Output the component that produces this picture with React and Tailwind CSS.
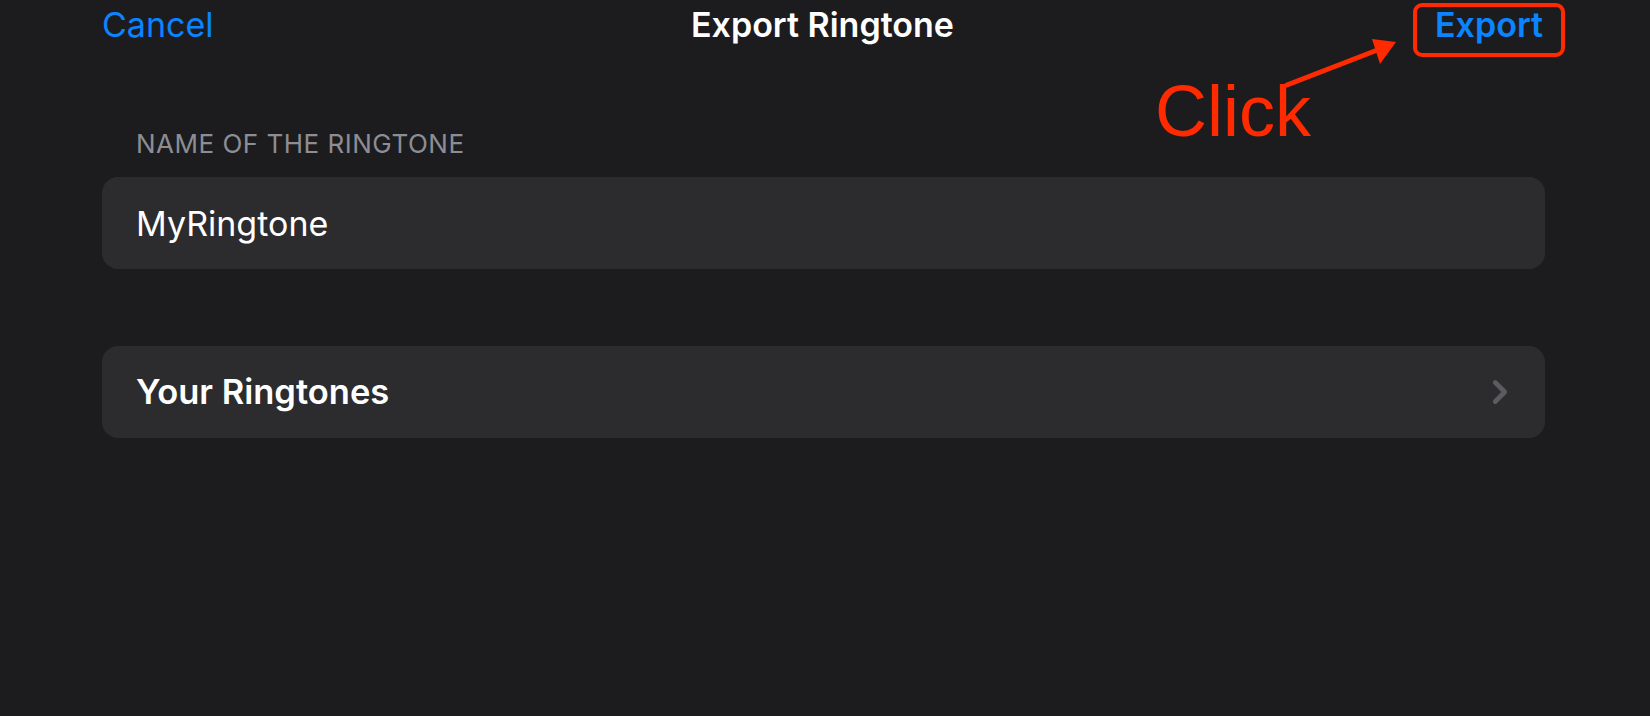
import { ChevronRight } from 'lucide-react';

const font = { fontFamily: 'Inter, "Liberation Sans", sans-serif' };

export default function App() {
  return (
    <div className="relative w-[1650px] h-[716px] bg-[#1c1c1e] overflow-hidden" style={font}>
      {/* Nav bar */}
      <div className="grid grid-cols-3 items-center pl-[102px] pr-[107px] h-[50px]">
        <span className="text-[34px] leading-none text-[#0a84ff] justify-self-start">Cancel</span>
        <span className="text-[34px] leading-none font-semibold text-white justify-self-center">Export Ringtone</span>
        <span className="relative text-[34px] leading-none font-semibold text-[#0a84ff] justify-self-end">
          Export
          <span className="absolute -left-[22px] -right-[22px] -top-[5px] -bottom-[15px] border-4 border-[#ff2a00] rounded-[9px]" />
        </span>
      </div>

      {/* Annotation */}
      <svg className="absolute left-[1280px] top-[36px]" width="120" height="56" viewBox="0 0 120 56">
        <line x1="7" y1="49" x2="100" y2="13" stroke="#ff2a00" strokeWidth="5" strokeLinecap="round" />
        <polygon points="116,6 92,3 100,28" fill="#ff2a00" />
      </svg>
      <div className="absolute left-[1155px] top-[75px] text-[72px] leading-none text-[#ff2a00]" style={{ fontFamily: '"Liberation Sans", Arial, sans-serif' }}>
        Click
      </div>

      {/* Content */}
      <div className="pl-[102px] pr-[105px] pt-[81px]">
        <div className="pl-[34px] text-[26px] leading-none text-[#8d8d93] tracking-[0.5px]">NAME OF THE RINGTONE</div>
        <div className="mt-[20px] h-[92px] rounded-[16px] bg-[#2c2c2e] flex items-center pl-[34px]">
          <span className="text-[34px] text-white">MyRingtone</span>
        </div>

        <div className="mt-[77px] h-[92px] rounded-[16px] bg-[#2c2c2e] flex items-center justify-between pl-[34px] pr-[26px]">
          <span className="text-[34.5px] font-semibold text-white">Your Ringtones</span>
          <ChevronRight size={38} strokeWidth={3} className="text-[#5b5b60]" />
        </div>
      </div>
    </div>
  );
}
